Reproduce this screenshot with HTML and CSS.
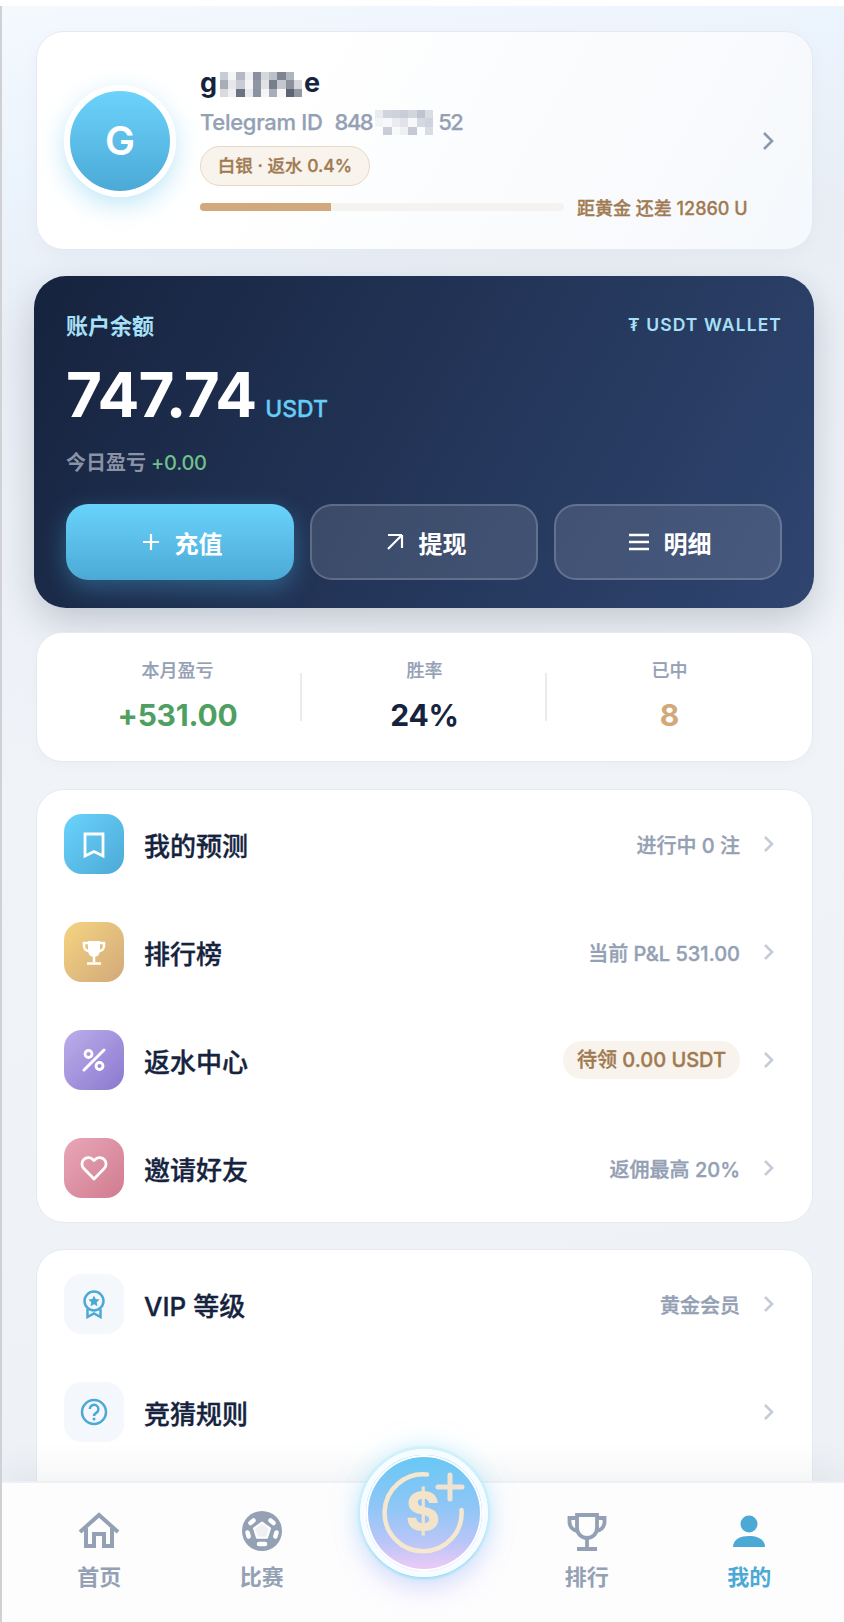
FILE: index.html
```html
<!DOCTYPE html>
<html lang="zh-CN">
<head>
  <meta charset="UTF-8" />
  <meta name="viewport" content="width=device-width, initial-scale=1.0"/>
  <title>我的</title>
  <link rel="stylesheet" href="styles.css">
</head>
<body>
<div class="screen">
  <main class="content">

    <!-- Profile -->
    <section class="card profile">
      <div class="avatar">G</div>
      <div class="profile-info">
        <div class="name">g<svg class="mosaic" width="82" height="25" viewBox="0 0 10 3" shape-rendering="crispEdges">
          <rect x="0" y="0" width="1" height="1" fill="#c8ccd4"/><rect x="1" y="0" width="1" height="1" fill="#f4f5f7"/><rect x="2" y="0" width="1" height="1" fill="#b5b9c3"/><rect x="3" y="0" width="1" height="1" fill="#eeeff2"/><rect x="4" y="0" width="1" height="1" fill="#8a919e"/><rect x="5" y="0" width="1" height="1" fill="#d4d7dc"/><rect x="6" y="0" width="1" height="1" fill="#bcc0c8"/><rect x="7" y="0" width="1" height="1" fill="#7d8591"/><rect x="8" y="0" width="1" height="1" fill="#b0b4be"/>
          <rect x="0" y="1" width="1" height="1" fill="#a8adb7"/><rect x="1" y="1" width="1" height="1" fill="#e5e7eb"/><rect x="2" y="1" width="1" height="1" fill="#c9ccd4"/><rect x="3" y="1" width="1" height="1" fill="#f5f5f7"/><rect x="4" y="1" width="1" height="1" fill="#8f95a1"/><rect x="5" y="1" width="1" height="1" fill="#e0e2e6"/><rect x="6" y="1" width="1" height="1" fill="#777f8c"/><rect x="7" y="1" width="1" height="1" fill="#c4c7cf"/><rect x="8" y="1" width="1" height="1" fill="#8a919d"/><rect x="9" y="1" width="1" height="1" fill="#d5d7dc"/>
          <rect x="0" y="2" width="1" height="1" fill="#d8dade"/><rect x="1" y="2" width="1" height="1" fill="#f0f0f2"/><rect x="2" y="2" width="1" height="1" fill="#6b7380"/><rect x="3" y="2" width="1" height="1" fill="#e8e9ec"/><rect x="4" y="2" width="1" height="1" fill="#8c93a0"/><rect x="5" y="2" width="1" height="1" fill="#f5f5f6"/><rect x="6" y="2" width="1" height="1" fill="#a8adb7"/><rect x="7" y="2" width="1" height="1" fill="#f8f8f9"/><rect x="8" y="2" width="1" height="1" fill="#5d6573"/><rect x="9" y="2" width="1" height="1" fill="#9098a4"/>
        </svg>e</div>
        <div class="tg-id">Telegram ID<span class="tg-num">848</span><svg class="mosaic-id" width="60" height="25" viewBox="0 0 7 3" shape-rendering="crispEdges">
          <rect x="0" y="0" width="1" height="1" fill="#e8ebf0"/><rect x="1" y="0" width="1" height="1" fill="#cfd4dd"/><rect x="2" y="0" width="1" height="1" fill="#cdd2db"/><rect x="3" y="0" width="1" height="1" fill="#c8cdd7"/><rect x="4" y="0" width="1" height="1" fill="#d0d5de"/><rect x="5" y="0" width="1" height="1" fill="#bfc5d0"/><rect x="6" y="0" width="1" height="1" fill="#d8dce3"/>
          <rect x="0" y="1" width="1" height="1" fill="#f3f4f7"/><rect x="1" y="1" width="1" height="1" fill="#f7f8fa"/><rect x="2" y="1" width="1" height="1" fill="#e9ecf0"/><rect x="3" y="1" width="1" height="1" fill="#e0e3e9"/><rect x="4" y="1" width="1" height="1" fill="#f7f8fa"/><rect x="5" y="1" width="1" height="1" fill="#d4d8e0"/><rect x="6" y="1" width="1" height="1" fill="#cfd3dc"/>
          <rect x="1" y="2" width="1" height="1" fill="#c8cdd7"/><rect x="2" y="2" width="1" height="1" fill="#f8f9fa"/><rect x="3" y="2" width="1" height="1" fill="#eef0f3"/><rect x="4" y="2" width="1" height="1" fill="#c4c9d3"/><rect x="6" y="2" width="1" height="1" fill="#d8dce3"/>
        </svg><span class="tg-num-end">52</span></div>
        <div class="tier-badge">白银 · 返水 0.4%</div>
        <div class="progress-row">
          <div class="progress"><div class="progress-fill"></div></div>
          <span class="progress-text">距黄金 还差 12860 U</span>
        </div>
      </div>
      <svg class="profile-arrow" width="14" height="20" viewBox="0 0 14 20"><path d="M3 2l8 8-8 8" fill="none" stroke="currentColor" stroke-width="2.6"/></svg>
    </section>

    <!-- Wallet -->
    <section class="wallet">
      <div class="wallet-head">
        <span class="wallet-label">账户余额</span>
        <span class="wallet-tag">₮ USDT WALLET</span>
      </div>
      <div class="balance"><span class="balance-num">747.74</span><span class="balance-unit">USDT</span></div>
      <div class="today">今日盈亏 <span class="today-num">+0.00</span></div>
      <div class="wallet-actions">
        <button class="wallet-btn primary">
          <svg width="20" height="20" viewBox="0 0 20 20"><path d="M10 2v16M2 10h16" stroke="#fff" stroke-width="2.2" fill="none"/></svg>
          充值
        </button>
        <button class="wallet-btn">
          <svg width="20" height="20" viewBox="0 0 20 20"><path d="M3 3h14v0M17 3v13M17 3L3 17" stroke="#fff" stroke-width="2.2" fill="none"/></svg>
          提现
        </button>
        <button class="wallet-btn">
          <svg width="22" height="20" viewBox="0 0 22 20"><path d="M1 3h20M1 10h20M1 17h20" stroke="#fff" stroke-width="2.4" fill="none"/></svg>
          明细
        </button>
      </div>
    </section>

    <!-- Stats -->
    <section class="card stats">
      <div class="stat">
        <div class="stat-label">本月盈亏</div>
        <div class="stat-value green">+531.00</div>
      </div>
      <div class="stat">
        <div class="stat-label">胜率</div>
        <div class="stat-value">24%</div>
      </div>
      <div class="stat">
        <div class="stat-label">已中</div>
        <div class="stat-value gold">8</div>
      </div>
    </section>

    <!-- Menu -->
    <section class="card menu">
      <div class="menu-row">
        <div class="menu-icon blue">
          <svg width="30" height="30" viewBox="0 0 30 30"><path d="M6 5h18v22l-9-4.5L6 27z" fill="none" stroke="#fff" stroke-width="2.8"/></svg>
        </div>
        <span class="menu-title">我的预测</span>
        <span class="menu-note">进行中 0 注</span>
        <svg class="menu-arrow" width="12" height="18" viewBox="0 0 12 18"><path d="M2 2l7 7-7 7" fill="none" stroke="currentColor" stroke-width="2.6"/></svg>
      </div>
      <div class="menu-row">
        <div class="menu-icon yellow">
          <svg width="30" height="30" viewBox="0 0 30 30"><path d="M9 4h12v10a6 6 0 0 1-12 0z" fill="#fff"/><path d="M9 6H5v3a5 5 0 0 0 5 5M21 6h4v3a5 5 0 0 1-5 5M15 19v6M8 26.500h14" fill="none" stroke="#fff" stroke-width="2.500"/></svg>
        </div>
        <span class="menu-title">排行榜</span>
        <span class="menu-note">当前 P&amp;L 531.00</span>
        <svg class="menu-arrow" width="12" height="18" viewBox="0 0 12 18"><path d="M2 2l7 7-7 7" fill="none" stroke="currentColor" stroke-width="2.6"/></svg>
      </div>
      <div class="menu-row">
        <div class="menu-icon purple">
          <svg width="30" height="30" viewBox="0 0 30 30"><path d="M5 25L25 5" stroke="#fff" stroke-width="3" stroke-linecap="round"/><circle cx="9.500" cy="9" r="3.500" fill="none" stroke="#fff" stroke-width="2.800"/><circle cx="20.500" cy="21" r="3.500" fill="none" stroke="#fff" stroke-width="2.800"/></svg>
        </div>
        <span class="menu-title">返水中心</span>
        <span class="menu-pill">待领 0.00 USDT</span>
        <svg class="menu-arrow" width="12" height="18" viewBox="0 0 12 18"><path d="M2 2l7 7-7 7" fill="none" stroke="currentColor" stroke-width="2.6"/></svg>
      </div>
      <div class="menu-row">
        <div class="menu-icon pink">
          <svg width="30" height="30" viewBox="0 0 30 30"><path d="M15 26L4.800 15.500a6.400 6.400 0 0 1 9-9.100L15 7.600l1.200-1.200a6.400 6.400 0 0 1 9 9.100z" fill="none" stroke="#fff" stroke-width="2.800" stroke-linejoin="round"/></svg>
        </div>
        <span class="menu-title">邀请好友</span>
        <span class="menu-note">返佣最高 20%</span>
        <svg class="menu-arrow" width="12" height="18" viewBox="0 0 12 18"><path d="M2 2l7 7-7 7" fill="none" stroke="currentColor" stroke-width="2.6"/></svg>
      </div>
    </section>

    <section class="card menu">
      <div class="menu-row">
        <div class="menu-icon plain">
          <svg width="30" height="30" viewBox="0 0 30 30"><circle cx="15" cy="12" r="9.500" fill="none" stroke="#4ca9d6" stroke-width="2.500"/><path d="M15 6.500l1.700 3.600 3.900.5-2.900 2.700.8 3.900-3.500-2-3.500 2 .8-3.900-2.900-2.700 3.900-.5z" fill="#4ca9d6"/><path d="M8.500 20v8l6.500-3.500 6.500 3.500v-8" fill="none" stroke="#4ca9d6" stroke-width="2.500"/></svg>
        </div>
        <span class="menu-title">VIP 等级</span>
        <span class="menu-note">黄金会员</span>
        <svg class="menu-arrow" width="12" height="18" viewBox="0 0 12 18"><path d="M2 2l7 7-7 7" fill="none" stroke="currentColor" stroke-width="2.6"/></svg>
      </div>
      <div class="menu-row">
        <div class="menu-icon plain">
          <svg width="30" height="30" viewBox="0 0 30 30"><circle cx="15" cy="15" r="12" fill="none" stroke="#4ca9d6" stroke-width="2.500"/><path d="M10.800 12a4.300 4.300 0 1 1 6.700 3.600c-1.500 1-2.500 1.800-2.500 3.400" fill="none" stroke="#4ca9d6" stroke-width="2.500"/><circle cx="15" cy="22" r="1.500" fill="#4ca9d6"/></svg>
        </div>
        <span class="menu-title">竞猜规则</span>
        <svg class="menu-arrow" width="12" height="18" viewBox="0 0 12 18"><path d="M2 2l7 7-7 7" fill="none" stroke="currentColor" stroke-width="2.6"/></svg>
      </div>
      <!-- rest of the list is behind the tab bar -->
      <div class="menu-row"></div>
      <div class="menu-row"></div>
    </section>
  </main>

  <!-- Bottom nav -->
  <nav class="tabbar">
    <div class="tab">
      <svg width="44" height="44" viewBox="0 0 44 44"><path d="M3 23L22 6l19 17M9 19v18h8V25h10v12h8V19" fill="none" stroke="currentColor" stroke-width="4"/></svg>
      <span>首页</span>
    </div>
    <div class="tab">
      <svg width="44" height="44" viewBox="0 0 44 44">
        <circle cx="22" cy="22" r="20" fill="currentColor"/>
        <path d="M22 13.500l8 5.900-3 9.400H17l-3-9.400z" fill="#eef0f4" stroke="#fff" stroke-width="2" stroke-linejoin="round"/>
        <g fill="none" stroke="#fff" stroke-width="4.500" stroke-linecap="round">
          <path d="M13.500 11.500l-3 2.500"/><path d="M30.500 11.500l3 2.500"/><path d="M7.500 23.500l1.200 4"/><path d="M36.500 23.500l-1.200 4"/><path d="M19 35h6"/>
        </g>
      </svg>
      <span>比赛</span>
    </div>
    <div class="tab"></div>
    <div class="tab">
      <svg width="44" height="44" viewBox="0 0 44 44"><path d="M12 6h20v13a10 10 0 0 1-20 0z" fill="none" stroke="currentColor" stroke-width="3.800"/><path d="M12 9H4.500v4a9 9 0 0 0 8.500 9M32 9h7.500v4a9 9 0 0 1-8.500 9M22 29v10M12 40h20" fill="none" stroke="currentColor" stroke-width="3.800"/></svg>
      <span>排行</span>
    </div>
    <div class="tab active">
      <svg width="44" height="44" viewBox="0 0 44 44"><circle cx="22" cy="15" r="8.500" fill="currentColor"/><path d="M6 38c0-8 8-11 16-11s16 3 16 11z" fill="currentColor"/></svg>
      <span>我的</span>
    </div>
  </nav>

  <!-- Center deposit button, sits over the nav edge -->
  <div class="fab">
    <svg width="116" height="116" viewBox="0 0 116 116">
      <path d="M61 19.500A38.500 38.500 0 1 0 95.500 55" fill="none" stroke="#f6e7cf" stroke-width="4.500" stroke-linecap="round"/>
      <path d="M72 32h24M84 20v24" stroke="#f1e3d2" stroke-width="5" stroke-linecap="round" fill="none"/>
      <text class="fab-dollar" x="57" y="75">$</text>
    </svg>
  </div>
</div>
</body>
</html>
```

FILE: styles.css
```css
/* Reset */
* {
  margin: 0;
  padding: 0;
  box-sizing: border-box;
}

body {
  width: 844px;
  height: 1622px;
  overflow: hidden;
  background: #fff;
  padding-top: 6px;
  font-family: Inter, "Noto Sans CJK SC", sans-serif;
  color: #16233e;
}

.screen {
  position: relative;
  height: 1616px;
  overflow: hidden;
  border-left: 2px solid #cfd1d4;
  background: linear-gradient(170deg, #f4f9fe 0%, #ebf3fc 10%, #e9eef5 20%, #f0f3f8 45%, #edf1f6 100%);
}

.content {
  display: flex;
  flex-direction: column;
  padding: 25px 31px 0 34px;
}

.card {
  background: #fff;
  border: 1px solid #e6eaf0;
  border-radius: 28px;
}

/* Profile */
.profile {
  display: flex;
  align-items: center;
  height: 219px;
  padding: 0 37px 0 27px;
  gap: 12px;
  background: linear-gradient(120deg, #fff 30%, #f5f8fc 100%);
  box-shadow: 0 6px 18px rgba(22, 35, 62, 0.03);
}

.avatar {
  flex: none;
  width: 112px;
  height: 112px;
  margin-right: 12px;
  border: 6px solid #fff;
  border-radius: 50%;
  background: linear-gradient(180deg, #6bd3fc, #4ca9d6);
  box-shadow: 0 8px 24px rgba(76, 185, 235, 0.35);
  color: #fff;
  font-size: 40px;
  font-weight: 600;
  line-height: 100px;
  text-align: center;
}

.profile-info {
  flex: 1;
  min-width: 0;
}

.name {
  display: flex;
  align-items: center;
  height: 34px;
  font-size: 27px;
  font-weight: 700;
}

.mosaic {
  margin: 4px 2px 0 3px;
  filter: blur(0.5px);
}

.tg-id {
  display: flex;
  align-items: center;
  height: 28px;
  margin-top: 8px;
  color: #94a0b4;
  font-size: 22px;
  font-weight: 500;
  letter-spacing: -0.3px;
  -webkit-text-stroke: 0.25px #94a0b4;
  white-space: pre;
}

.tg-num,
.tg-num-end {
  letter-spacing: -1.5px;
}

.tg-num {
  margin-left: 12px;
}

.mosaic-id {
  margin: 2px 4px 0 2px;
  filter: blur(0.5px);
}

.tier-badge {
  width: 170px;
  height: 40px;
  margin-top: 10px;
  border: 1.5px solid #e8d8c2;
  border-radius: 20px;
  background: #f8f3ec;
  color: #a07a50;
  font-size: 17.500px;
  font-weight: 500;
  -webkit-text-stroke: 0.3px #a07a50;
  line-height: 37px;
  text-align: center;
}

.progress-row {
  display: flex;
  align-items: center;
  height: 18px;
  margin-top: 12px;
  gap: 13px;
}

.progress {
  flex: none;
  width: 364px;
  height: 8px;
  border-radius: 4px;
  background: #f5f3f0;
  overflow: hidden;
}

.progress-fill {
  width: 36%;
  height: 100%;
  background: #d1a97a;
}

.progress-text {
  color: #a07a50;
  font-size: 18px;
  font-weight: 500;
  -webkit-text-stroke: 0.3px #a07a50;
  white-space: nowrap;
}

.profile-arrow {
  flex: none;
  color: #8c99ad;
}

/* Wallet */
.wallet {
  height: 332px;
  margin: 26px -1px 0 -2px;
  padding: 34px 32px 28px;
  border-radius: 32px;
  background: linear-gradient(120deg, #16233e 0%, #24365a 55%, #2f4570 100%);
  box-shadow: 0 14px 36px rgba(22, 35, 62, 0.2);
}

.wallet-head {
  display: flex;
  justify-content: space-between;
  align-items: center;
  height: 28px;
}

.wallet-label {
  color: #a8e0f8;
  font-size: 22px;
  font-weight: 700;
}

.wallet-tag {
  color: #a8e0f8;
  font-size: 17.500px;
  font-weight: 600;
  letter-spacing: 1.1px;
}

.balance {
  display: flex;
  align-items: baseline;
  gap: 9px;
  height: 72px;
  margin-top: 21px;
}

.balance-num {
  color: #fff;
  font-size: 62px;
  font-weight: 700;
  letter-spacing: -1px;
  line-height: 72px;
}

.balance-unit {
  color: #66cdf5;
  font-size: 23px;
  font-weight: 500;
  -webkit-text-stroke: 0.3px #66cdf5;
}

.today {
  margin-top: 18px;
  color: #8a93a5;
  font-size: 20px;
  font-weight: 600;
  line-height: 28px;
}

.today-num {
  color: #6fc28a;
  font-weight: 500;
  letter-spacing: -0.3px;
}

.wallet-actions {
  display: grid;
  grid-template-columns: repeat(3, 1fr);
  gap: 16px;
  margin-top: 27px;
}

.wallet-btn {
  display: flex;
  justify-content: center;
  align-items: center;
  gap: 14px;
  height: 76px;
  padding-left: 3px;
  border: 2px solid rgba(255, 255, 255, 0.18);
  border-radius: 22px;
  background: rgba(255, 255, 255, 0.12);
  color: #fff;
  font-family: inherit;
  font-size: 24px;
  font-weight: 700;
}

.wallet-btn.primary {
  border: none;
  background: linear-gradient(180deg, #69d3fc, #4ca9d6);
  box-shadow: 0 8px 24px rgba(76, 185, 235, 0.35);
}

/* Stats */
.stats {
  display: grid;
  grid-template-columns: repeat(3, 1fr);
  height: 130px;
  margin-top: 24px;
  padding: 24px 20px 0;
  border-radius: 26px;
  box-shadow: 0 4px 14px rgba(22, 35, 62, 0.02);
}

.stat {
  position: relative;
  text-align: center;
}

.stat:first-child {
  padding-right: 4px;
}

/* short divider between columns */
.stat:not(:last-child)::after {
  content: "";
  position: absolute;
  top: 16px;
  right: 0;
  width: 2px;
  height: 48px;
  background: #e8ebf0;
}

.stat-label {
  color: #94a0b4;
  font-size: 18px;
  font-weight: 500;
  -webkit-text-stroke: 0.2px #94a0b4;
  line-height: 28px;
}

.stat-value {
  margin-top: 10px;
  font-size: 30px;
  font-weight: 700;
  letter-spacing: -0.2px;
  line-height: 40px;
}

.green {
  color: #4f9f62;
}

.gold {
  color: #d1a97a;
}

/* Menu */
.menu {
  margin-top: 27px;
}

.menu + .menu {
  margin-top: 26px;
}

.menu-row {
  display: flex;
  align-items: center;
  height: 108px;
  padding: 0 37px 0 27px;
}

.menu-icon {
  display: flex;
  justify-content: center;
  align-items: center;
  flex: none;
  width: 60px;
  height: 60px;
  border-radius: 18px;
}

.blue {
  background: linear-gradient(135deg, #69d3fc, #4ca9d6);
}

.yellow {
  background: linear-gradient(135deg, #f5d481, #d1a97a);
}

.purple {
  background: linear-gradient(135deg, #bcaeea, #8a79cf);
}

.pink {
  background: linear-gradient(135deg, #e8a7b8, #d17b8f);
}

.plain {
  background: #f4f8fc;
}

.menu-title {
  flex: 1;
  margin-left: 20px;
  font-size: 26px;
  font-weight: 500;
  -webkit-text-stroke: 0.35px #16233e;
}

.menu-note {
  color: #94a0b4;
  font-size: 20px;
  font-weight: 500;
  -webkit-text-stroke: 0.35px #94a0b4;
}

.menu-pill {
  height: 38px;
  padding: 0 14px;
  border-radius: 19px;
  background: #f8f3ec;
  color: #a07a50;
  font-size: 20px;
  font-weight: 500;
  -webkit-text-stroke: 0.35px #a07a50;
  line-height: 38px;
}

.menu-arrow {
  flex: none;
  margin-left: 23px;
  color: #c5ccd8;
}

/* Bottom nav */
.tabbar {
  position: absolute;
  left: 0;
  right: 0;
  bottom: 0;
  display: grid;
  grid-template-columns: repeat(5, 162.500px);
  height: 141px;
  padding-left: 16px;
  border-top: 2px solid #eff0f3;
  background: #fdfdfe;
  box-shadow: 0 -14px 30px rgba(22, 35, 62, 0.05);
}

.tab {
  display: flex;
  flex-direction: column;
  align-items: center;
  padding-top: 26px;
  color: #94a0b4;
  font-size: 22px;
  font-weight: 700;
}

.tab span {
  margin-top: 8px;
  line-height: 32px;
}

.tab.active {
  color: #4ca9d6;
}

.fab {
  position: absolute;
  left: 358px;
  top: 1443px;
  display: flex;
  justify-content: center;
  align-items: center;
  width: 128px;
  height: 128px;
  border: 6px solid #f6fcff;
  border-radius: 50%;
  background: linear-gradient(180deg, #67c8f5 0%, #8fc6f6 45%, #b8c6f8 75%, #e6c9f6 95%);
  box-shadow: inset 0 0 0 2px #fff, 0 0 0 3px rgba(190, 240, 252, 0.55), 0 2px 2px rgba(60, 160, 230, 0.5), 0 0 26px rgba(140, 225, 250, 0.55), 0 14px 24px rgba(215, 180, 250, 0.35);
}

.fab-dollar {
  fill: #f3e3c8;
  font-size: 52px;
  font-weight: 800;
  text-anchor: middle;
}
```
